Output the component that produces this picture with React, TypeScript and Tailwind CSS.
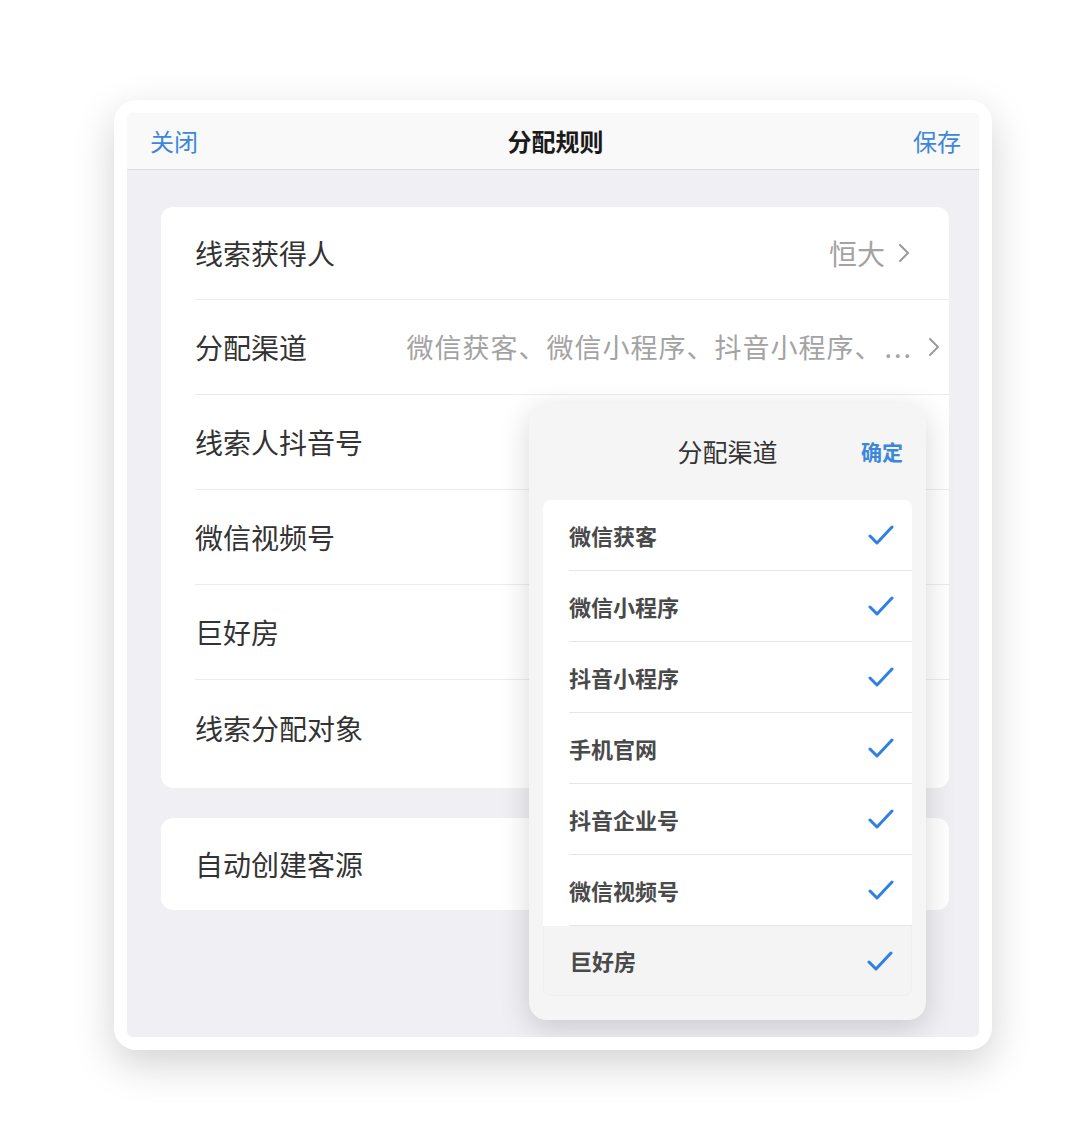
import React from "react";

const font = { fontFamily: '"Noto Sans CJK SC", "Noto Sans", sans-serif' };

const Chevron = () => (
  <svg width="14" height="24" viewBox="0 0 14 24" fill="none">
    <polyline points="3,4 11,12 3,20" stroke="#9a9a9a" strokeWidth="2" strokeLinecap="round" strokeLinejoin="round" />
  </svg>
);

const Check = () => (
  <svg width="26" height="22" viewBox="0 0 26 22" fill="none">
    <polyline points="2,12 9,19 24,3" stroke="#2f80e4" strokeWidth="3" strokeLinecap="round" strokeLinejoin="round" />
  </svg>
);

const rows = ["线索人抖音号", "微信视频号", "巨好房", "线索分配对象"];
const channels = ["微信获客", "微信小程序", "抖音小程序", "手机官网", "抖音企业号", "微信视频号"];

export default function App() {
  return (
    <div className="min-h-[1137px] bg-white pt-[100px] pl-[114px]" style={font}>
      <div className="w-[878px] h-[950px] bg-white rounded-[22px] p-[13px] shadow-[0_14px_40px_rgba(0,0,0,0.18)]">
        <div className="relative h-full bg-[#efeff4] rounded-[6px] overflow-hidden">
          {/* nav bar */}
          <div className="h-[57px] bg-[#f9f9f9] border-b border-[#dcdce0] flex items-center justify-between pl-[23px] pr-[18px] text-[24px]">
            <span className="text-[#3c87d9]">关闭</span>
            <span className="font-bold text-[#1a1a1a]">分配规则</span>
            <span className="text-[#3c87d9]">保存</span>
          </div>

          <div className="pl-[34px] pr-[30px] pt-[37px]">
            <div className="bg-white rounded-[12px] pl-[34px] pb-[13px]">
              <div className="h-[93px] flex items-center justify-between pr-[38px] border-b border-[#ececec]">
                <span className="text-[28px] text-[#333]">线索获得人</span>
                <span className="flex items-center gap-[12px] text-[28px] text-[#a3a3a3]">
                  恒大
                  <Chevron />
                </span>
              </div>
              <div className="h-[95px] flex items-center pr-[8px] border-b border-[#ececec]">
                <span className="text-[28px] text-[#333] w-[213px]">分配渠道</span>
                <span className="flex-1 flex items-center justify-end text-[27px] text-[#a3a3a3] whitespace-nowrap">
                  <span className="tracking-[1px]">微信获客、微信小程序、抖音小程序、</span>
                  <span className="ml-[2px] mr-[14px] tracking-[2px]">...</span>
                  <Chevron />
                </span>
              </div>
              {rows.map((r, i) => (
                <div
                  key={r}
                  className={`h-[95px] flex items-center ${i < rows.length - 1 ? "border-b border-[#ececec]" : ""}`}
                >
                  <span className="text-[28px] text-[#333]">{r}</span>
                </div>
              ))}
            </div>

            <div className="mt-[30px] bg-white rounded-[12px] pl-[34px] h-[92px] flex items-center">
              <span className="text-[28px] text-[#333]">自动创建客源</span>
            </div>
          </div>

          {/* popup */}
          <div className="absolute left-[402px] top-[290px] w-[397px] h-[617px] bg-[#f5f5f5] rounded-[18px] shadow-[0_8px_30px_rgba(0,0,0,0.16)] px-[14px]">
            <div className="h-[97px] relative flex items-center justify-center">
              <span className="text-[25px] text-[#333]">分配渠道</span>
              <span className="absolute right-[9px] text-[21px] font-bold text-[#3c87d9]">确定</span>
            </div>
            <div className="bg-white rounded-t-[8px]">
              {channels.map((c) => (
                <div key={c} className="h-[71px] pl-[26px]">
                  <div className="h-full flex items-center justify-between pr-[18px] border-b border-[#e6e6e6]">
                    <span className="text-[22px] font-semibold text-[#4a4a4a]">{c}</span>
                    <Check />
                  </div>
                </div>
              ))}
            </div>
            <div className="h-[70px] bg-[#f4f4f4] rounded-b-[8px] border border-t-0 border-[#efefef] pl-[26px] pr-[18px] flex items-center justify-between">
              <span className="text-[22px] font-semibold text-[#4a4a4a]">巨好房</span>
              <Check />
            </div>
          </div>
        </div>
      </div>
    </div>
  );
}
